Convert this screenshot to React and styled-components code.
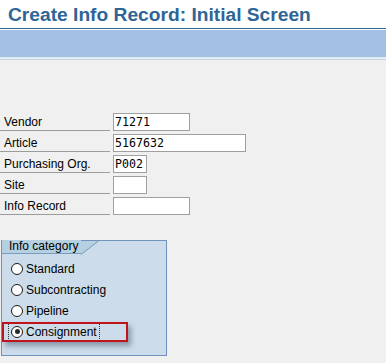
import React from "react";
import styled, { createGlobalStyle } from "styled-components";

const Global = createGlobalStyle`
  html, body { margin: 0; padding: 0; background: #f0f0f0; }
  body { font-family: "Liberation Sans", Arial, sans-serif; }
`;

const Page = styled.div`
  width: 386px;
  height: 363px;
  background: #f0f0f0;
  overflow: hidden;
  display: flex;
  flex-direction: column;
`;

const TitleBar = styled.div`
  height: 28px;
  background: #ffffff;
  border-bottom: 1px solid #346897;
  display: flex;
  align-items: center;
  padding-left: 8px;
  box-sizing: content-box;
`;

const Title = styled.h1`
  margin: 0;
  font-size: 19.2px;
  font-weight: bold;
  color: #2e6596;
  font-family: "Liberation Sans", Arial, sans-serif;
  line-height: 1;
  margin-top: 1px;
`;

const Toolbar = styled.div`
  height: 27px;
  background: #a4c0e3;
  border-top: 1px solid #ffffff;
  border-bottom: 2px solid #e4ecf3;
  box-shadow: 0 1px 0 #c6d7e8;
`;

const Form = styled.div`
  display: flex;
  flex-direction: column;
  gap: 3px;
  margin-top: 54px;
`;

const Row = styled.div`
  display: flex;
  align-items: stretch;
  height: 18px;
  gap: 3px;
`;

const Label = styled.div`
  width: 110px;
  box-sizing: border-box;
  border-bottom: 1px solid #9c9c9c;
  padding-left: 4px;
  font-size: 12px;
  color: #000;
  line-height: 18px;
`;

const Field = styled.div`
  width: ${(p) => p.$w}px;
  box-sizing: border-box;
  border: 1px solid #a0a0a0;
  background: #ffffff;
  font-family: "DejaVu Sans Mono", "Liberation Mono", monospace;
  font-size: 11.6px;
  line-height: 16px;
  padding-left: 1px;
  color: #000;
`;

const Group = styled.div`
  margin: 25px 0 0 1px;
  width: 166px;
  height: 116px;
  box-sizing: border-box;
  border: 1px solid #6f93ba;
  background: #ccdceb;
`;

const Tab = styled.div`
  display: flex;
  height: 13px;
  align-items: flex-end;
`;

const TabLabel = styled.div`
  background: #b5d0e0;
  border-bottom: 1px solid #7a9cbf;
  height: 13px;
  padding: 0 3px 0 7px;
  font-size: 12px;
  line-height: 12px;
  color: #000;
  white-space: nowrap;
`;

const TabSlant = styled.svg`
  display: block;
  width: 18px;
  height: 14px;
  margin-bottom: -1px;
`;

const Options = styled.div`
  display: flex;
  flex-direction: column;
  margin-top: 4px;
`;

const Option = styled.div`
  position: relative;
  height: 21px;
  display: flex;
  align-items: center;
  padding-left: 9px;
  gap: 3px;
  font-size: 12px;
  color: #000;
`;

const Radio = styled.span`
  width: 12px;
  height: 12px;
  box-sizing: border-box;
  border-radius: 50%;
  border: 1.5px solid #1a1a1a;
  background: #ffffff;
  display: inline-flex;
  align-items: center;
  justify-content: center;
  &::after {
    content: "";
    width: 5px;
    height: 5px;
    border-radius: 50%;
    background: ${(p) => (p.$on ? "#2a2a2a" : "transparent")};
  }
`;

const Focus = styled.span`
  display: inline-flex;
  align-items: center;
  gap: 3px;
  padding: 0 2px;
  margin-left: -3px;
  border-left: 1px dotted #333;
  border-right: 1px dotted #333;
  height: 15px;
`;

const Highlight = styled.div`
  position: absolute;
  left: 0px;
  top: 1px;
  width: 126px;
  height: 20px;
  box-sizing: border-box;
  border: 2px solid #c0141c;
  box-shadow: 3px 4px 5px rgba(60, 70, 90, 0.45);
  pointer-events: none;
`;

const fields = [
  { label: "Vendor", value: "71271", w: 77 },
  { label: "Article", value: "5167632", w: 133 },
  { label: "Purchasing Org.", value: "P002", w: 34 },
  { label: "Site", value: "", w: 34 },
  { label: "Info Record", value: "", w: 77 },
];

const options = ["Standard", "Subcontracting", "Pipeline", "Consignment"];

export default function App() {
  return (
    <Page>
      <Global />
      <TitleBar>
        <Title>Create Info Record: Initial Screen</Title>
      </TitleBar>
      <Toolbar />
      <Form>
        {fields.map((f) => (
          <Row key={f.label}>
            <Label>{f.label}</Label>
            <Field $w={f.w}>{f.value}</Field>
          </Row>
        ))}
      </Form>
      <Group>
        <Tab>
          <TabLabel>Info category</TabLabel>
          <TabSlant viewBox="0 0 18 14">
            <polygon points="0,0 18,0 0,14" fill="#b5d0e0" />
            <line x1="0" y1="13.5" x2="17.5" y2="0" stroke="#7a9cbf" strokeWidth="1" />
          </TabSlant>
        </Tab>
        <Options>
          {options.map((o) => {
            const on = o === "Consignment";
            return (
              <Option key={o}>
                {on ? (
                  <>
                    <Highlight />
                    <Focus>
                      <Radio $on />
                      {o}
                    </Focus>
                  </>
                ) : (
                  <>
                    <Radio />
                    {o}
                  </>
                )}
              </Option>
            );
          })}
        </Options>
      </Group>
    </Page>
  );
}
